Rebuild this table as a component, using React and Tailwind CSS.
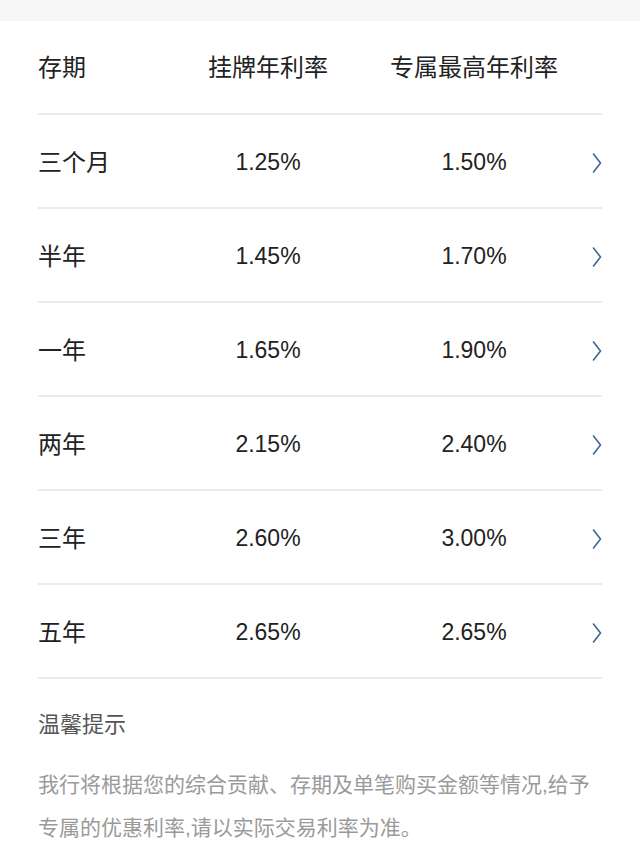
import React from "react";

const rows = [
  { term: "三个月", listed: "1.25%", top: "1.50%" },
  { term: "半年", listed: "1.45%", top: "1.70%" },
  { term: "一年", listed: "1.65%", top: "1.90%" },
  { term: "两年", listed: "2.15%", top: "2.40%" },
  { term: "三年", listed: "2.60%", top: "3.00%" },
  { term: "五年", listed: "2.65%", top: "2.65%" },
];

const Chevron = () => (
  <svg width="10" height="20" viewBox="0 0 10 20" fill="none">
    <polyline
      points="1.5,1 8.5,10 1.5,19"
      stroke="#3f6590"
      strokeWidth="1.6"
      strokeLinecap="round"
      strokeLinejoin="round"
    />
  </svg>
);

const App = () => {
  return (
    <div
      className="w-[640px] min-h-[868px] bg-white text-[#222222]"
      style={{ fontFamily: '"Liberation Sans", "Noto Sans CJK SC", sans-serif' }}
    >
      <div className="h-[21px] bg-[#f7f7f7]" />
      <div className="px-[38px]">
        <div className="flex items-center h-[94px] pt-[2px] border-b-2 border-[#ececec] text-[24px]">
          <div className="w-[150px]">存期</div>
          <div className="w-[160px] text-center">挂牌年利率</div>
          <div className="ml-[20px] w-[212px] text-center">专属最高年利率</div>
        </div>
        {rows.map((r) => (
          <div
            key={r.term}
            className="flex items-center h-[94px] pt-[3px] border-b-2 border-[#ececec]"
          >
            <div className="w-[150px] text-[24px]">{r.term}</div>
            <div className="w-[160px] text-center text-[23px]">{r.listed}</div>
            <div className="ml-[20px] w-[212px] text-center text-[23px]">{r.top}</div>
            <div className="flex-1 flex justify-end">
              <Chevron />
            </div>
          </div>
        ))}
        <div className="pt-[30px] text-[22px] leading-[32px] text-[#555555]">温馨提示</div>
        <p className="mt-[22px] text-[21px] leading-[43px] text-[#9a9a9a]">
          我行将根据您的综合贡献、存期及单笔购买金额等情况,给予
          <br />
          专属的优惠利率,请以实际交易利率为准。
        </p>
      </div>
    </div>
  );
};

export default App;
